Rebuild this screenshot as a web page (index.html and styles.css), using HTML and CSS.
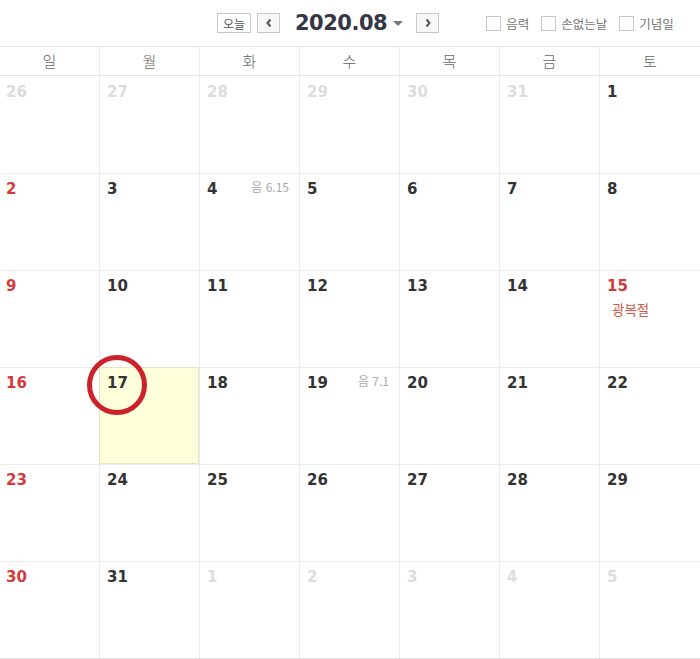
FILE: index.html
```html
<!DOCTYPE html>
<html lang="ko">
<head>
<meta charset="utf-8">
<link rel="stylesheet" href="styles.css">
</head>
<body>
<div class="cal">
  <div class="top">
    <div class="nav">
      <span class="btn today">오늘</span>
      <span class="btn arrow"><svg width="8" height="10" viewBox="0 0 8 10"><path d="M5.5 1.5 L2.5 5 L5.5 8.5" fill="none" stroke="#555" stroke-width="2"/></svg></span>
      <span class="title">2020.08</span>
      <span class="caret"></span>
      <span class="btn arrow next"><svg width="8" height="10" viewBox="0 0 8 10"><path d="M2.5 1.5 L5.5 5 L2.5 8.5" fill="none" stroke="#555" stroke-width="2"/></svg></span>
    </div>
    <div class="opts">
      <label class="opt"><span class="box"></span>음력</label>
      <label class="opt"><span class="box"></span>손없는날</label>
      <label class="opt"><span class="box"></span>기념일</label>
    </div>
  </div>
  <div class="week">
    <div>일</div><div>월</div><div>화</div><div>수</div><div>목</div><div>금</div><div>토</div>
  </div>
  <div class="grid">
    <div class="cell"><span class="d dim">26</span></div>
    <div class="cell"><span class="d dim">27</span></div>
    <div class="cell"><span class="d dim">28</span></div>
    <div class="cell"><span class="d dim">29</span></div>
    <div class="cell"><span class="d dim">30</span></div>
    <div class="cell"><span class="d dim">31</span></div>
    <div class="cell"><span class="d">1</span></div>

    <div class="cell"><span class="d red">2</span></div>
    <div class="cell"><span class="d">3</span></div>
    <div class="cell"><span class="d">4</span><span class="lunar">음 6.15</span></div>
    <div class="cell"><span class="d">5</span></div>
    <div class="cell"><span class="d">6</span></div>
    <div class="cell"><span class="d">7</span></div>
    <div class="cell"><span class="d">8</span></div>

    <div class="cell"><span class="d red">9</span></div>
    <div class="cell"><span class="d">10</span></div>
    <div class="cell"><span class="d">11</span></div>
    <div class="cell"><span class="d">12</span></div>
    <div class="cell"><span class="d">13</span></div>
    <div class="cell"><span class="d">14</span></div>
    <div class="cell"><span class="d red">15</span><div class="holiday">광복절</div></div>

    <div class="cell"><span class="d red">16</span></div>
    <div class="cell today-cell"><span class="d">17</span><span class="ring"></span></div>
    <div class="cell"><span class="d">18</span></div>
    <div class="cell"><span class="d">19</span><span class="lunar">음 7.1</span></div>
    <div class="cell"><span class="d">20</span></div>
    <div class="cell"><span class="d">21</span></div>
    <div class="cell"><span class="d">22</span></div>

    <div class="cell"><span class="d red">23</span></div>
    <div class="cell"><span class="d">24</span></div>
    <div class="cell"><span class="d">25</span></div>
    <div class="cell"><span class="d">26</span></div>
    <div class="cell"><span class="d">27</span></div>
    <div class="cell"><span class="d">28</span></div>
    <div class="cell"><span class="d">29</span></div>

    <div class="cell"><span class="d red">30</span></div>
    <div class="cell"><span class="d">31</span></div>
    <div class="cell"><span class="d dim">1</span></div>
    <div class="cell"><span class="d dim">2</span></div>
    <div class="cell"><span class="d dim">3</span></div>
    <div class="cell"><span class="d dim">4</span></div>
    <div class="cell"><span class="d dim">5</span></div>
  </div>
</div>
</body>
</html>
```
FILE: styles.css
```css
html, body {
  margin: 0;
  padding: 0;
  background: #fff;
}
body {
  font-family: "Noto Sans CJK KR", "Noto Sans", sans-serif;
  width: 700px;
  height: 659px;
  overflow: hidden;
}
.cal {
  width: 700px;
}
.top {
  height: 47px;
  border-bottom: 1px solid #e3e3e3;
  display: flex;
  align-items: center;
  box-sizing: border-box;
  padding-left: 217px;
}
.nav {
  display: flex;
  align-items: center;
}
.btn {
  box-sizing: border-box;
  height: 20px;
  border: 1px solid #c8c8c8;
  background: #f7f7f7;
  display: flex;
  align-items: center;
  justify-content: center;
  color: #555;
  font-size: 12px;
}
.today {
  width: 34px;
  background: #fff;
  margin-right: 6px;
  font-size: 12px;
}
.arrow {
  width: 23px;
}
.title {
  margin-left: 15px;
  font-family: "DejaVu Sans", "Noto Sans", sans-serif;
  font-weight: bold;
  font-size: 21px;
  letter-spacing: -0.5px;
  color: #363647;
  line-height: 24px;
}
.caret {
  margin-left: 6px;
  width: 0;
  height: 0;
  border-left: 5px solid transparent;
  border-right: 5px solid transparent;
  border-top: 5px solid #777;
  margin-top: 1px;
}
.next {
  margin-left: 13px;
}
.opts {
  display: flex;
  align-items: center;
  margin-left: 47px;
  gap: 12px;
}
.opt {
  display: flex;
  align-items: center;
  font-size: 12.5px;
  color: #777;
}
.box {
  box-sizing: border-box;
  width: 15px;
  height: 15px;
  border: 1px solid #c8c8c8;
  margin-right: 5px;
  background: #fff;
}
.week {
  display: grid;
  grid-template-columns: 99px repeat(5, 100px) 101px;
  height: 29px;
  border-bottom: 1px solid #e3e3e3;
  box-sizing: border-box;
}
.week div {
  border-left: 1px solid #ececec;
  text-align: center;
  font-size: 15px;
  line-height: 27px;
  color: #666;
  font-weight: 300;
}
.week div:first-child {
  border-left: none;
}
.grid {
  display: grid;
  grid-template-columns: 99px repeat(5, 100px) 101px;
  grid-auto-rows: 97px;
  border-bottom: 1px solid #e0e0e0;
}
.cell {
  position: relative;
  border-left: 1px solid #ececec;
  border-top: 1px solid #ececec;
  box-sizing: border-box;
  padding: 1px 0 0 7px;
}
.grid .cell:nth-child(7n+1) {
  border-left: none;
  padding-left: 6px;
}
.grid .cell:nth-child(-n+7) {
  border-top: none;
  padding-top: 2px;
}
.d {
  font-family: "DejaVu Sans", Verdana, sans-serif;
  font-weight: bold;
  font-size: 15px;
  color: #333;
  line-height: 18px;
}
.d.dim {
  color: #dcdcdc;
}
.d.red {
  color: #d23b3b;
}
.lunar {
  position: absolute;
  right: 10px;
  top: 4px;
  font-size: 12px;
  color: #aaa;
  line-height: 18px;
}
.holiday {
  margin-left: 5px;
  margin-top: 3px;
  font-size: 13.5px;
  color: #d25a4a;
}
.today-cell {
  background: #ffffdc;
  border: 1px solid #e5e5c0;
}
.ring {
  position: absolute;
  left: -13px;
  top: -13px;
  width: 50px;
  height: 50px;
  border: 5px solid #cc2229;
  border-radius: 50%;
}
```
